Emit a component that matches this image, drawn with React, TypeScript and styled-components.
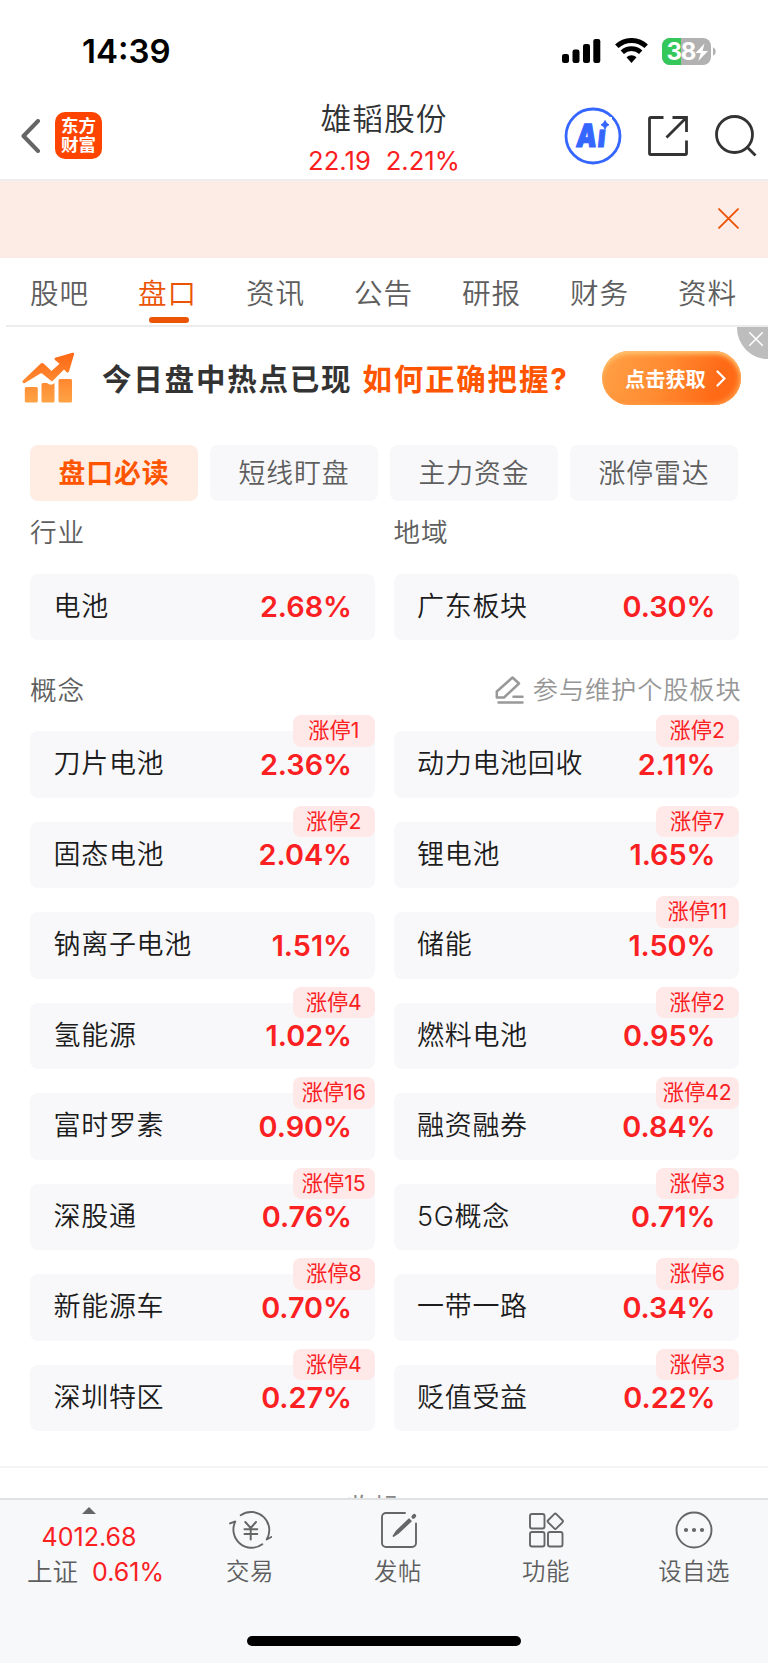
import React from "react";
import styled, { createGlobalStyle } from "styled-components";

const GlobalStyle = createGlobalStyle`
  *, *::before, *::after { box-sizing: border-box; }
  body {
    margin: 0;
    background: #fff;
    font-family: Inter, "Noto Sans CJK SC", sans-serif;
    font-weight: 400;
    color: #303133;
  }
  svg { display: block; flex: none; }
`;

const Screen = styled.div`
  width: 768px;
  height: 1663px;
  display: flex;
  flex-direction: column;
  overflow: hidden;
  background: #fff;
  white-space: nowrap;
`;

const StatusBar = styled.div`
  height: 92px;
  flex: none;
  display: flex;
  align-items: flex-start;
  justify-content: space-between;
  padding: 31px 51px 0 82px;
`;

const Clock = styled.div`
  font-size: 33px;
  line-height: 40px;
  font-weight: 600;
  color: #000;
`;

const StatusIcons = styled.div`
  display: flex;
  align-items: center;
  height: 40px;
`;

const Header = styled.header`
  height: 89px;
  flex: none;
  display: grid;
  grid-template-columns: 260px 1fr 260px;
  border-bottom: 2px solid #ededee;
`;

const HeaderLeft = styled.div`
  display: flex;
  align-items: center;
  padding: 0 0 0 21px;
  gap: 15px;
`;

const Logo = styled.div`
  width: 47px;
  height: 47px;
  border-radius: 10px;
  background: #ff4400;
  color: #fff;
  font-size: 17.5px;
  line-height: 18.5px;
  font-weight: 700;
  text-align: center;
  padding-top: 5px;
`;

const StockTitle = styled.div`
  text-align: center;
  padding-top: 7px;
`;

const StockName = styled.div`
  font-size: 30.8px;
  letter-spacing: 0.9px;
  line-height: 40px;
  font-weight: 350;
`;

const StockQuote = styled.div`
  display: flex;
  justify-content: center;
  gap: 15px;
  font-size: 25.6px;
  line-height: 30px;
  margin-top: 7px;
  color: #f9201f;
`;

const HeaderRight = styled.div`
  display: flex;
  align-items: center;
  padding: 1px 0 0 56px;
`;

const Notice = styled.div`
  height: 77px;
  flex: none;
  display: flex;
  align-items: center;
  justify-content: flex-end;
  padding: 0 29px 2px 0;
  background: #fcece5;
`;

const Tabs = styled.nav`
  height: 69px;
  flex: none;
  display: flex;
  margin-left: 6px;
  border-bottom: 2px solid #ececed;
`;

const Tab = styled.div<{ $active?: boolean }>`
  width: 108px;
  flex: none;
  display: flex;
  flex-direction: column;
  align-items: center;
  padding: 16px 1px 0 0;
  font-size: 28.6px;
  letter-spacing: 0.8px;
  line-height: 40px;
  font-weight: 350;
  color: ${(p) => (p.$active ? "#ec5405" : "#5e5e5e")};
  &::after {
    content: "";
    width: 40px;
    height: 6px;
    margin-top: 3px;
    margin-left: 2px;
    border-radius: 3px;
    background: ${(p) => (p.$active ? "#ec5405" : "transparent")};
  }
`;

const Promo = styled.div`
  height: 102px;
  flex: none;
  display: flex;
  align-items: center;
  position: relative;
  padding: 0 27px 0 22px;
`;

const PromoText = styled.div`
  margin-left: 27px;
  display: flex;
  gap: 10px;
  font-size: 29.5px;
  line-height: 40px;
  letter-spacing: 1.8px;
  font-weight: 700;
  color: #333;
  padding-top: 1px;
`;

const PromoAccent = styled.span`
  color: #ff5500;
`;

const PromoButton = styled.div`
  width: 139px;
  height: 54px;
  margin-left: auto;
  display: flex;
  align-items: center;
  padding-left: 23px;
  gap: 10px;
  border-radius: 27px;
  background: linear-gradient(110deg, #ff9c42 10%, #ff8a30 45%, #ff6a17 80%);
  box-shadow: inset 0 4px 5px -1px #ffc673, inset -3px -2px 5px -1px #ff9a45;
  color: #fff;
  font-size: 20.2px;
  font-weight: 700;
`;

const PromoClose = styled.div`
  position: absolute;
  top: 0;
  right: 0;
  width: 31.5px;
  height: 32px;
  border-bottom-left-radius: 32px;
  background: #bdbdbd;
  padding: 5px 0 0 12.5px;
`;

const Segments = styled.div`
  height: 72px;
  flex: none;
  display: grid;
  grid-template-columns: repeat(4, 168px);
  gap: 12px;
  padding: 16px 30px 0;
`;

const Segment = styled.div<{ $active?: boolean }>`
  height: 56px;
  border-radius: 8px;
  text-align: center;
  font-size: 26.8px;
  letter-spacing: 0.9px;
  line-height: 57px;
  background: ${(p) => (p.$active ? "#ffede4" : "#f8f8fa")};
  color: ${(p) => (p.$active ? "#ff5500" : "#5e5e5e")};
  font-weight: ${(p) => (p.$active ? 700 : 350)};
`;

const SectionHead = styled.div`
  flex: none;
  display: grid;
  grid-template-columns: 345px 345px;
  column-gap: 18.5px;
  padding-left: 30px;
  font-size: 26.6px;
  letter-spacing: 0.9px;
  line-height: 40px;
  font-weight: 350;
  color: #5e5e5e;
`;

const IndustryHead = styled(SectionHead)`
  margin-top: 11px;
`;

const ConceptHead = styled(SectionHead)`
  margin-top: 30px;
`;

const Maintain = styled.div`
  display: flex;
  justify-content: flex-end;
  align-items: center;
  gap: 9px;
  margin-right: -3px;
  font-size: 25.2px;
  letter-spacing: 0.9px;
  color: #969696;
`;

const Cards = styled.div`
  flex: none;
  display: grid;
  grid-template-columns: 345px 345px;
  column-gap: 18.5px;
  row-gap: 24px;
  padding-left: 30px;
`;

const IndustryCards = styled(Cards)`
  margin-top: 21.5px;
`;

const ConceptCards = styled(Cards)`
  margin-top: 21px;
`;

const Card = styled.div`
  position: relative;
  height: 66.5px;
  display: flex;
  align-items: center;
  justify-content: space-between;
  padding: 0 23px 0 23.5px;
  border-radius: 8px;
  background: #f8f8fb;
`;

const CardName = styled.span`
  font-size: 27px;
  letter-spacing: 0.7px;
  line-height: 40px;
  font-weight: 350;
  color: #1c1c1c;
`;

const CardRate = styled.span`
  font-size: 28.8px;
  font-weight: 600;
  color: #fb2021;
`;

const LimitBadge = styled.span`
  position: absolute;
  top: -16px;
  right: 0;
  width: 82.5px;
  height: 31.5px;
  border-radius: 8px;
  background: #ffe8e8;
  color: #f9201f;
  font-size: 21.2px;
  line-height: 31.5px;
  text-align: center;
`;

const Collapse = styled.div`
  margin-top: 34.5px;
  flex: 1;
  min-height: 0;
  overflow: hidden;
  border-top: 2px solid #f4f4f5;
  text-align: center;
  padding: 20px 24px 0 0;
  font-size: 26px;
  line-height: 40px;
  color: #888;
`;

const BottomBar = styled.footer`
  height: 165px;
  flex: none;
  display: flex;
  flex-direction: column;
  align-items: center;
  justify-content: space-between;
  border-top: 2px solid #e0e1e3;
  background: #f7f8fa;
  padding-bottom: 17px;
`;

const BottomItems = styled.div`
  width: 768px;
  display: grid;
  grid-template-columns: 176px repeat(4, 148px);
`;

const IndexQuote = styled.div`
  display: flex;
  flex-direction: column;
  align-items: center;
  padding: 7px 0 0 2px;
  font-size: 25px;
  color: #f9201f;
`;

const IndexValue = styled.div`
  line-height: 30px;
  margin-top: 8px;
`;

const IndexRow = styled.div`
  display: flex;
  gap: 14px;
  line-height: 30px;
  margin-top: 5px;
  padding-left: 13px;
`;

const IndexName = styled.span`
  color: #5e5e5e;
  font-size: 25.5px;
  font-weight: 350;
`;

const Action = styled.div`
  display: flex;
  flex-direction: column;
  align-items: center;
  padding-top: 10px;
  font-size: 23.4px;
  line-height: 32px;
  letter-spacing: 0.5px;
  font-weight: 350;
  color: #5e5e5e;
`;

const ActionLabel = styled.div`
  margin-top: 6px;
`;

const HomeIndicator = styled.div`
  width: 274px;
  height: 10px;
  border-radius: 5px;
  background: #000;
`;

const IconSlot = styled.span<{ $gap: number }>`
  margin-left: ${(p) => p.$gap}px;
`;

const SignalIcon = () => (
  <svg width="39" height="26" viewBox="0 0 39 26">
    <rect x="0" y="16" width="7" height="9" rx="2.2" />
    <rect x="10.5" y="11.5" width="7" height="13.5" rx="2.2" />
    <rect x="21" y="6" width="7" height="19" rx="2.2" />
    <rect x="31.3" y="1" width="7" height="24" rx="2.2" />
  </svg>
);

const WifiIcon = () => (
  <svg width="33" height="26" viewBox="0 0 33 26" fill="none" stroke="#000">
    <path d="M1.8 8.3a21.5 21.5 0 0 1 29.4 0" strokeWidth="5" />
    <path d="M7.3 14.2a13.6 13.6 0 0 1 18.4 0" strokeWidth="4.8" />
    <path d="M11.5 19.2a7.5 7.5 0 0 1 10 0L16.5 25z" fill="#000" stroke="none" />
  </svg>
);

const BatteryIcon = () => (
  <svg width="55" height="27" viewBox="0 0 55 27">
    <defs>
      <clipPath id="battery">
        <rect width="49" height="27" rx="8" />
      </clipPath>
    </defs>
    <g clipPath="url(#battery)">
      <rect width="49" height="27" fill="#b1b1b1" />
      <rect width="19" height="27" fill="#34c759" />
    </g>
    <path d="M51 9.300c3.600 1.500 3.600 7 0 8.400z" fill="#b1b1b1" />
    <text x="4.5" y="22.2" fontFamily="Inter" fontWeight="700" fontSize="24" letterSpacing="-1.2" fill="#fff">
      38
    </text>
    <path d="M42.500 5.500L33.500 15h5.300l-2.500 8L46 13h-5.400z" fill="#fff" />
  </svg>
);

const BackIcon = () => (
  <svg width="19" height="34" viewBox="0 0 19 34" fill="none" stroke="#666" strokeWidth="4" strokeLinecap="round" strokeLinejoin="round">
    <path d="M17 2L2.500 17 17 32" />
  </svg>
);

const AiIcon = () => (
  <svg width="58" height="58" viewBox="0 0 58 58">
    <circle cx="29" cy="29" r="27" fill="#fff" stroke="#3566ff" strokeWidth="2.800" />
    <g transform="translate(11.500 39.500) skewX(-6) scale(0.8 1)">
      <text fontFamily="Inter" fontWeight="900" fontSize="32" letterSpacing="1.5" fill="#3566ff" stroke="#3566ff" strokeWidth="1.2" strokeLinejoin="round">
        Ai
      </text>
    </g>
    <path d="M35 10h13v12.300H35z" fill="#fff" />
    <path d="M41 13.500q1 3.300 4 4.300-3 1-4 4.200-1-3.200-4-4.200 3-1 4-4.300z" fill="#3566ff" stroke="#3566ff" strokeLinejoin="round" />
  </svg>
);

const ShareIcon = () => (
  <svg width="40" height="40" viewBox="0 0 40 40" fill="none" stroke="#333" strokeWidth="2.800">
    <path d="M15.500 1.500H2.700a1.200 1.200 0 0 0-1.200 1.200v34.600a1.200 1.200 0 0 0 1.200 1.200h34.600a1.200 1.200 0 0 0 1.200-1.200V24.500" />
    <path d="M24.500 1.500h14v14.500M38 2L18.500 21.500" />
  </svg>
);

const SearchIcon = () => (
  <svg width="42" height="42" viewBox="0 0 42 42" fill="none" stroke="#333" strokeWidth="2.800">
    <circle cx="19.500" cy="19.500" r="18" />
    <path d="M31.500 31.500L40.500 40.500" />
  </svg>
);

const CloseIcon = ({ size, color, width }: { size: number; color: string; width: number }) => (
  <svg width={size} height={size} viewBox="0 0 20 20" stroke={color} strokeWidth={width} strokeLinecap="round">
    <path d="M1 1l18 18M19 1L1 19" />
  </svg>
);

const GrowthIcon = () => (
  <svg width="53" height="52" viewBox="0 0 53 52">
    <defs>
      <linearGradient id="growth" x1="0" y1="0" x2="0" y2="52" gradientUnits="userSpaceOnUse">
        <stop offset="0" stopColor="#ff6613" />
        <stop offset="1" stopColor="#ffa548" />
      </linearGradient>
    </defs>
    <g fill="url(#growth)">
      <path d="M1 28.500L18.500 11.800q1.700-1.500 3.300 0L29.500 19 37.500 11.800 33 8q-1.500-1.700 1-2.500L50.500 0.800q2-0.300 1.500 1.700L47 19.500q-1 2-2.500 0.500L42 17.500 30 29.500 20 21.500Q19 21 18 21.800L2.500 31.300Q-0.500 31 1 28.500z" />
      <path d="M2.800 36.500q0-1.500 1.500-1.500h10q1.500 0 1.500 1.500V49q0 1.500-1.500 1.500h-10q-1.500 0-1.500-1.500z" />
      <path d="M19.500 32.500q0-1.500 1.500-1.500h4q4 3.500 7.500 0V49q0 1.500-1.500 1.500H21q-1.500 0-1.500-1.500z" />
      <path d="M36.500 28.500q0-1.500 1.500-1.500h10.500q1.500 0 1.500 1.500V49q0 1.500-1.500 1.500H38q-1.500 0-1.500-1.500z" />
    </g>
  </svg>
);

const ChevronIcon = () => (
  <svg width="10" height="17" viewBox="0 0 10 17" fill="none" stroke="#fff" strokeWidth="2.200" strokeLinecap="round">
    <path d="M1.500 1.500L8.500 8.500l-7 7" />
  </svg>
);

const EditIcon = () => (
  <svg width="29" height="28" viewBox="0 0 29 28" fill="none" stroke="#999" strokeWidth="2.500" strokeLinejoin="round" strokeLinecap="round">
    <path d="M17.500 1.500l6.500 6L9 21.500H1.800V15.500z" />
    <path d="M18.500 20.700h9M3.500 26.600h24" />
  </svg>
);

const TradeIcon = () => (
  <svg width="44" height="40" viewBox="0 0 44 40" fill="none" stroke="#666" strokeWidth="1.900" strokeLinecap="round" strokeLinejoin="round">
    <path d="M12.700 5.200A18.200 18.200 0 0 1 38.700 29.500L43.300 27M34.300 34.300A18.200 18.200 0 0 1 7.300 11.500L2 13.400" />
    <path d="M17.300 12L22.700 18 28 12M16.500 19.300h12.800M16.500 24h12.800M22.700 18V29.600" strokeWidth="2" />
  </svg>
);

const PostIcon = () => (
  <svg width="40" height="40" viewBox="0 0 40 40" fill="none" stroke="#666" strokeWidth="1.900" strokeLinecap="round">
    <path d="M27 3H8a4 4 0 0 0-4 4v26a4 4 0 0 0 4 4h26a4 4 0 0 0 4-4V13.500" />
    <path d="M15.500 26l3-4.500L31 9.300l1.800 1.800L20 23z" fill="#666" strokeWidth="1.800" strokeLinejoin="round" />
    <path d="M35.300 6.800l1-1" strokeWidth="3.800" />
  </svg>
);

const GridIcon = () => (
  <svg width="38" height="40" viewBox="0 0 38 40" fill="none" stroke="#666" strokeWidth="1.900">
    <rect x="3" y="4" width="14.500" height="14.500" rx="2" />
    <rect x="3" y="22" width="14.500" height="14.500" rx="2" />
    <rect x="21" y="22" width="14.500" height="14.500" rx="2" />
    <rect x="22.500" y="5.500" width="11.600" height="11.600" rx="1.500" transform="rotate(45 28.300 11.300)" />
  </svg>
);

const MoreIcon = () => (
  <svg width="40" height="40" viewBox="0 0 40 40" fill="#666">
    <circle cx="20" cy="20" r="17.500" fill="none" stroke="#666" strokeWidth="1.900" />
    <circle cx="12" cy="20" r="2.100" />
    <circle cx="20" cy="20" r="2.100" />
    <circle cx="28" cy="20" r="2.100" />
  </svg>
);

type Board = { name: string; rate: string; limit?: number };

const industries: Board[] = [
  { name: "电池", rate: "2.68%" },
  { name: "广东板块", rate: "0.30%" },
];

const concepts: Board[] = [
  { name: "刀片电池", rate: "2.36%", limit: 1 },
  { name: "动力电池回收", rate: "2.11%", limit: 2 },
  { name: "固态电池", rate: "2.04%", limit: 2 },
  { name: "锂电池", rate: "1.65%", limit: 7 },
  { name: "钠离子电池", rate: "1.51%" },
  { name: "储能", rate: "1.50%", limit: 11 },
  { name: "氢能源", rate: "1.02%", limit: 4 },
  { name: "燃料电池", rate: "0.95%", limit: 2 },
  { name: "富时罗素", rate: "0.90%", limit: 16 },
  { name: "融资融券", rate: "0.84%", limit: 42 },
  { name: "深股通", rate: "0.76%", limit: 15 },
  { name: "5G概念", rate: "0.71%", limit: 3 },
  { name: "新能源车", rate: "0.70%", limit: 8 },
  { name: "一带一路", rate: "0.34%", limit: 6 },
  { name: "深圳特区", rate: "0.27%", limit: 4 },
  { name: "贬值受益", rate: "0.22%", limit: 3 },
];

const BoardCard = ({ name, rate, limit }: Board) => (
  <Card>
    <CardName>{name}</CardName>
    <CardRate>{rate}</CardRate>
    {limit !== undefined && <LimitBadge>{`涨停${limit}`}</LimitBadge>}
  </Card>
);

const tabs = ["股吧", "盘口", "资讯", "公告", "研报", "财务", "资料"];
const segments = ["盘口必读", "短线盯盘", "主力资金", "涨停雷达"];
const actions = [
  { label: "交易", Icon: TradeIcon },
  { label: "发帖", Icon: PostIcon },
  { label: "功能", Icon: GridIcon },
  { label: "设自选", Icon: MoreIcon },
];

export default function App() {
  return (
    <>
      <GlobalStyle />
      <Screen>
        <StatusBar>
          <Clock>14:39</Clock>
          <StatusIcons>
            <SignalIcon />
            <IconSlot $gap={14}>
              <WifiIcon />
            </IconSlot>
            <IconSlot $gap={14}>
              <BatteryIcon />
            </IconSlot>
          </StatusIcons>
        </StatusBar>
        <Header>
          <HeaderLeft>
            <BackIcon />
            <Logo>
              东方
              <br />
              财富
            </Logo>
          </HeaderLeft>
          <StockTitle>
            <StockName>雄韬股份</StockName>
            <StockQuote>
              <span>22.19</span>
              <span>2.21%</span>
            </StockQuote>
          </StockTitle>
          <HeaderRight>
            <AiIcon />
            <IconSlot $gap={26}>
              <ShareIcon />
            </IconSlot>
            <IconSlot $gap={27}>
              <SearchIcon />
            </IconSlot>
          </HeaderRight>
        </Header>
        <Notice>
          <CloseIcon size={21} color="#ec5405" width={1.8} />
        </Notice>
        <Tabs>
          {tabs.map((t, i) => (
            <Tab key={t} $active={i === 1}>
              {t}
            </Tab>
          ))}
        </Tabs>
        <Promo>
          <GrowthIcon />
          <PromoText>
            今日盘中热点已现<PromoAccent>如何正确把握?</PromoAccent>
          </PromoText>
          <PromoButton>
            点击获取
            <ChevronIcon />
          </PromoButton>
          <PromoClose>
            <CloseIcon size={14} color="#fff" width={2.2} />
          </PromoClose>
        </Promo>
        <Segments>
          {segments.map((s, i) => (
            <Segment key={s} $active={i === 0}>
              {s}
            </Segment>
          ))}
        </Segments>
        <IndustryHead>
          <span>行业</span>
          <span>地域</span>
        </IndustryHead>
        <IndustryCards>
          {industries.map((b) => (
            <BoardCard key={b.name} {...b} />
          ))}
        </IndustryCards>
        <ConceptHead>
          <span>概念</span>
          <Maintain>
            <EditIcon />
            参与维护个股板块
          </Maintain>
        </ConceptHead>
        <ConceptCards>
          {concepts.map((b) => (
            <BoardCard key={b.name} {...b} />
          ))}
        </ConceptCards>
        <Collapse>收起</Collapse>
        <BottomBar>
          <BottomItems>
            <IndexQuote>
              <svg width="14" height="7" viewBox="0 0 14 7">
                <path d="M0 7L7 0l7 7z" fill="#666" />
              </svg>
              <IndexValue>4012.68</IndexValue>
              <IndexRow>
                <IndexName>上证</IndexName>
                <span>0.61%</span>
              </IndexRow>
            </IndexQuote>
            {actions.map(({ label, Icon }) => (
              <Action key={label}>
                <Icon />
                <ActionLabel>{label}</ActionLabel>
              </Action>
            ))}
          </BottomItems>
          <HomeIndicator />
        </BottomBar>
      </Screen>
    </>
  );
}
